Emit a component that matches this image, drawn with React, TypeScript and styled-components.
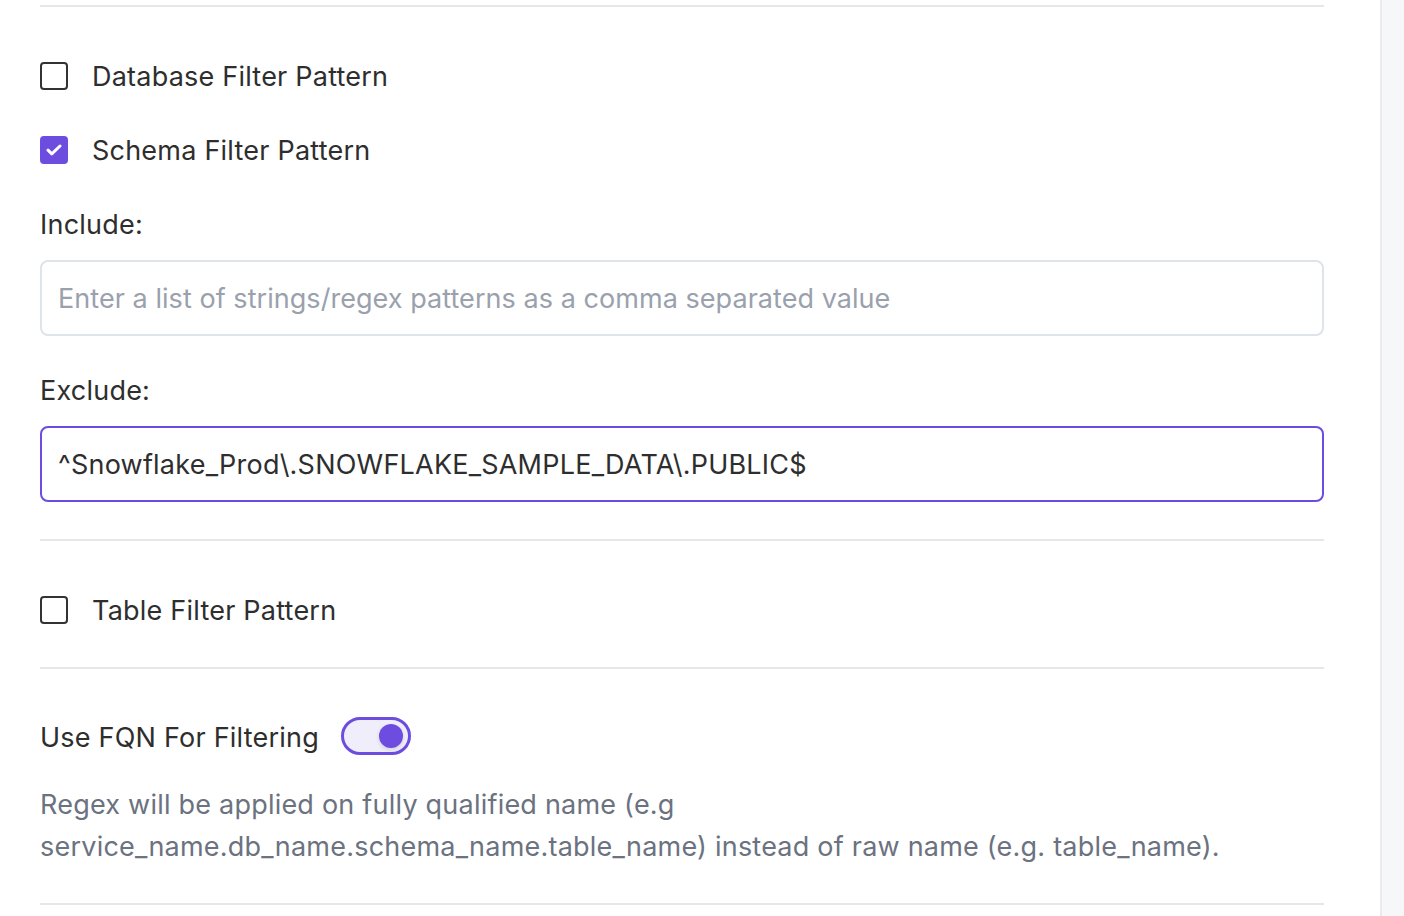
import React from "react";
import styled, { createGlobalStyle } from "styled-components";

const Global = createGlobalStyle`
  html, body { margin: 0; padding: 0; background: #ffffff; }
  body { font-family: Inter, "Noto Sans", sans-serif; color: #2e2e2e; }
  * { box-sizing: border-box; }
`;

const Page = styled.div`
  display: flex;
  width: 1404px;
  height: 916px;
  overflow: hidden;
`;

const Main = styled.div`
  width: 1380px;
  padding: 5px 56px 0 40px;
  display: flex;
  flex-direction: column;
  font-size: 27px;
  letter-spacing: 0.22px;
`;

const Side = styled.div`
  flex: 1;
  background: #f6f7f9;
  border-left: 2px solid #ebebef;
`;

const Divider = styled.div<{ $mt?: number }>`
  height: 2px;
  background: #e6e6eb;
  margin-top: ${(p) => p.$mt ?? 0}px;
  flex-shrink: 0;
`;

const CheckRow = styled.label<{ $mt: number }>`
  display: flex;
  align-items: center;
  gap: 24px;
  margin-top: ${(p) => p.$mt}px;
  height: 28px;
  line-height: 28px;
  color: #2e2e2e;
`;

const CheckText = styled.span`
  padding-top: 2px;
`;

const Box = styled.span<{ $checked?: boolean }>`
  width: 28px;
  height: 28px;
  border-radius: 4px;
  border: 2px solid ${(p) => (p.$checked ? "#6c4ddf" : "#333333")};
  background: ${(p) => (p.$checked ? "#6c4ddf" : "#ffffff")};
  display: flex;
  align-items: center;
  justify-content: center;
  flex-shrink: 0;
`;

const FieldLabel = styled.div<{ $mt: number }>`
  margin-top: ${(p) => p.$mt}px;
  padding-top: 2px;
  height: 30px;
  line-height: 30px;
  color: #2e2e2e;
`;

const Input = styled.input<{ $focused?: boolean }>`
  margin-top: 22px;
  height: 76px;
  width: 100%;
  border-radius: 8px;
  border: 2px solid ${(p) => (p.$focused ? "#6c4ddf" : "#dfe3ea")};
  padding: 0 16px;
  font-family: Inter, "Noto Sans", sans-serif;
  font-size: 27px;
  letter-spacing: 0.22px;
  color: #2e2e2e;
  outline: none;
  background: #fff;
  &::placeholder { color: #9aa1ad; letter-spacing: 0.05px; }
`;

const SwitchRow = styled.div`
  display: flex;
  align-items: center;
  gap: 22px;
  margin-top: 48px;
  height: 38px;
`;

const SwitchText = styled.span`
  line-height: 38px;
  padding-top: 4px;
  color: #2e2e2e;
`;

const Toggle = styled.span`
  position: relative;
  width: 70px;
  height: 38px;
  border-radius: 19px;
  border: 3px solid #6c4ddf;
  background: #f0eefa;
  flex-shrink: 0;
`;

const Knob = styled.span`
  position: absolute;
  right: 5px;
  top: 4px;
  width: 24px;
  height: 24px;
  border-radius: 50%;
  background: #6c4ddf;
  box-shadow: 0 2px 4px rgba(0, 0, 0, 0.12);
`;

const Desc = styled.p`
  margin: 29px 0 0;
  line-height: 42px;
  color: #6b7280;
  max-width: 1240px;
`;

const Check = () => (
  <svg width="16" height="12" viewBox="0 0 16 12" fill="none">
    <path d="M2 6.2l3.8 3.6L14 2" stroke="#fff" strokeWidth="3" strokeLinecap="round" strokeLinejoin="round" />
  </svg>
);

export default function App() {
  return (
    <Page>
      <Global />
      <Main>
        <Divider />
        <CheckRow $mt={55}>
          <Box />
          <CheckText>Database Filter Pattern</CheckText>
        </CheckRow>
        <CheckRow $mt={46}>
          <Box $checked>
            <Check />
          </Box>
          <CheckText>Schema Filter Pattern</CheckText>
        </CheckRow>
        <FieldLabel $mt={44}>Include:</FieldLabel>
        <Input placeholder="Enter a list of strings/regex patterns as a comma separated value" readOnly />
        <FieldLabel $mt={38}>Exclude:</FieldLabel>
        <Input $focused value="^Snowflake_Prod\.SNOWFLAKE_SAMPLE_DATA\.PUBLIC$" readOnly />
        <Divider $mt={37} />
        <CheckRow $mt={55}>
          <Box />
          <CheckText>Table Filter Pattern</CheckText>
        </CheckRow>
        <Divider $mt={43} />
        <SwitchRow>
          <SwitchText>Use FQN For Filtering</SwitchText>
          <Toggle>
            <Knob />
          </Toggle>
        </SwitchRow>
        <Desc>
          Regex will be applied on fully qualified name (e.g
          <br />
          service_name.db_name.schema_name.table_name) instead of raw name (e.g. table_name).
        </Desc>
        <Divider $mt={35} />
      </Main>
      <Side />
    </Page>
  );
}
